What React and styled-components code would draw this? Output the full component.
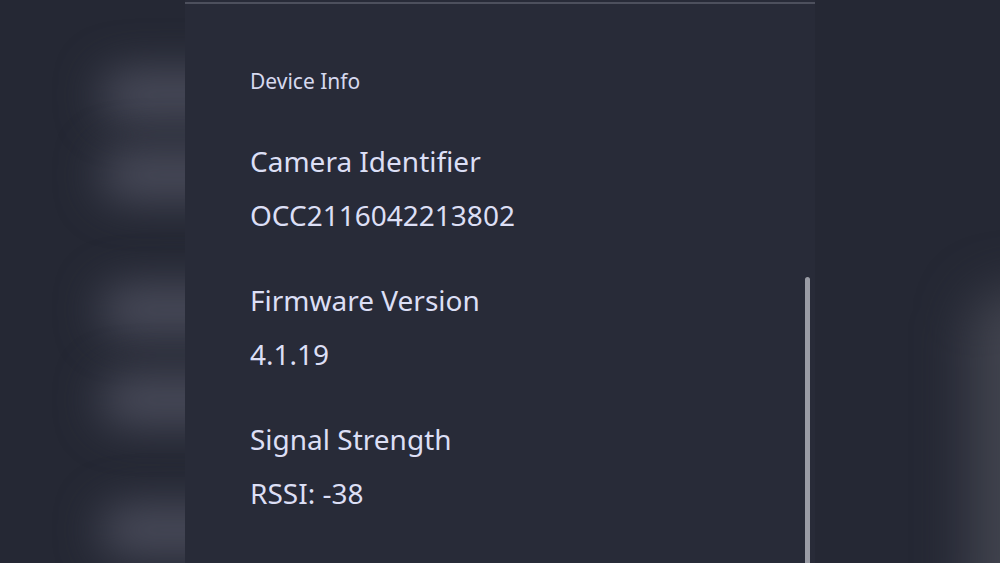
import styled, { createGlobalStyle } from "styled-components";

const GlobalStyle = createGlobalStyle`
  html, body {
    margin: 0;
    padding: 0;
    background: #252834;
    overflow: hidden;
  }
`;

const fields = [
  { label: "Camera Identifier", value: "OCC2116042213802" },
  { label: "Firmware Version", value: "4.1.19" },
  { label: "Signal Strength", value: "RSSI: -38" },
];

const leftBlobs = [70, 30, 85, 40, 80];

export default function App() {
  return (
    <>
      <GlobalStyle />
      <Screen>
        <SideColumn>
          {leftBlobs.map((gap, i) => (
            <Blob key={i} $gap={gap} />
          ))}
        </SideColumn>

        <Panel>
          <Divider />
          <Content>
            <SectionTitle>Device Info</SectionTitle>
            {fields.map((f) => (
              <Field key={f.label}>
                <FieldText>{f.label}</FieldText>
                <FieldText>{f.value}</FieldText>
              </Field>
            ))}
          </Content>
          <ScrollThumb />
        </Panel>

        <RightColumn>
          <RightGlow />
        </RightColumn>
      </Screen>
    </>
  );
}

const Screen = styled.div`
  display: grid;
  grid-template-columns: 185px 630px 1fr;
  height: 563px;
  overflow: hidden;
  font-family: "Noto Sans", "Open Sans", sans-serif;
`;

const SideColumn = styled.div`
  display: flex;
  flex-direction: column;
  overflow: hidden;
  padding-left: 100px;
`;

const Blob = styled.div`
  flex: none;
  margin-top: ${({ $gap }) => $gap}px;
  width: 180px;
  height: 50px;
  border-radius: 25px;
  background: #4a4c5b;
  filter: blur(22px);
`;

const RightColumn = styled.div`
  overflow: hidden;
  padding-top: 290px;
`;

const RightGlow = styled.div`
  margin-left: 155px;
  width: 120px;
  height: 340px;
  border-radius: 40px;
  background: #42444f;
  filter: blur(26px);
`;

const Panel = styled.section`
  position: relative;
  background: #282b38;
  display: flex;
  flex-direction: column;
`;

const Divider = styled.div`
  margin-top: 2px;
  height: 2px;
  background: #4d505d;
`;

const Content = styled.div`
  display: flex;
  flex-direction: column;
  padding: 62px 0 0 65px;
  color: #dcdff5;
`;

const SectionTitle = styled.h2`
  margin: 0 0 38px;
  font-size: 21px;
  font-weight: 400;
  line-height: 30px;
  color: #d6d9ef;
`;

const Field = styled.div`
  display: flex;
  flex-direction: column;
  margin-bottom: 31px;
`;

const FieldText = styled.div`
  font-size: 28px;
  line-height: 54px;
  font-weight: 400;
`;

const ScrollThumb = styled.div`
  position: absolute;
  right: 5px;
  top: 277px;
  bottom: -20px;
  width: 5px;
  border-radius: 3px;
  background: #9a9ca5;
`;
